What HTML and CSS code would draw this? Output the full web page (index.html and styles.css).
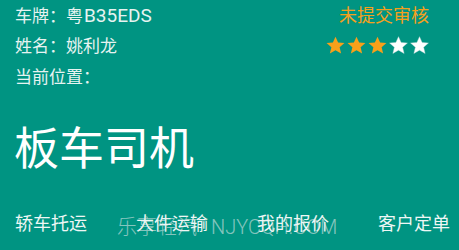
FILE: index.html
```html
<!DOCTYPE html>
<html lang="zh-CN">
<head>
<meta charset="utf-8">
<link rel="stylesheet" href="styles.css">
</head>
<body>
<div class="screen">
  <div class="info">
    <div class="fields">
      <div class="field">车牌：粤<span class="latin">B35EDS</span></div>
      <div class="field">姓名：姚利龙</div>
      <div class="field">当前位置：</div>
    </div>
    <div class="status">
      <div class="status-text">未提交审核</div>
      <div class="stars">
        <svg class="star on" viewBox="0 0 24 24"><path d="M12 0.8l3.3 7.4 8 .7-6.1 5.3 1.9 7.9L12 17.9l-7.1 4.2 1.9-7.9L.7 8.9l8-.7z"/></svg>
        <svg class="star on" viewBox="0 0 24 24"><path d="M12 0.8l3.3 7.4 8 .7-6.1 5.3 1.9 7.9L12 17.9l-7.1 4.2 1.9-7.9L.7 8.9l8-.7z"/></svg>
        <svg class="star on" viewBox="0 0 24 24"><path d="M12 0.8l3.3 7.4 8 .7-6.1 5.3 1.9 7.9L12 17.9l-7.1 4.2 1.9-7.9L.7 8.9l8-.7z"/></svg>
        <svg class="star off" viewBox="0 0 24 24"><path d="M12 0.8l3.3 7.4 8 .7-6.1 5.3 1.9 7.9L12 17.9l-7.1 4.2 1.9-7.9L.7 8.9l8-.7z"/></svg>
        <svg class="star off" viewBox="0 0 24 24"><path d="M12 0.8l3.3 7.4 8 .7-6.1 5.3 1.9 7.9L12 17.9l-7.1 4.2 1.9-7.9L.7 8.9l8-.7z"/></svg>
      </div>
    </div>
  </div>
  <div class="title">板车司机</div>
  <div class="nav">
    <div class="nav-item">轿车托运</div>
    <div class="nav-item">大件运输</div>
    <div class="nav-item">我的报价</div>
    <div class="nav-item">客户定单</div>
  </div>
  <div class="watermark">乐享轻汽<span class="watermark-site">NJYCQH.COM</span></div>
</div>
</body>
</html>
```
FILE: styles.css
```css
html, body {
  margin: 0;
  padding: 0;
}
body {
  background: #009482;
  font-family: Roboto, "Noto Sans CJK SC", sans-serif;
}
.screen {
  position: relative;
  width: 459px;
  height: 250px;
  overflow: hidden;
  background: #009482;
  color: #e6f3f1;
}
.info {
  display: flex;
  justify-content: space-between;
  padding: 0 30px 0 15px;
}
.field {
  font-size: 17px;
  line-height: 31px;
  height: 31px;
}
.latin {
  font-size: 19px;
  margin-left: 1px;
}
.status {
  display: flex;
  flex-direction: column;
  align-items: flex-end;
}
.status-text {
  font-size: 18px;
  line-height: 31px;
  height: 31px;
  color: #f6a01c;
}
.stars {
  display: flex;
  gap: 2px;
  height: 29px;
  align-items: center;
}
.star {
  width: 19px;
  height: 19px;
}
.star.on path {
  fill: #f8a01a;
}
.star.off path {
  fill: #ffffff;
  stroke: #c4dcd8;
  stroke-width: 0.5;
}
.title {
  margin-top: 27px;
  padding-left: 14px;
  font-size: 45px;
  line-height: 60px;
  height: 60px;
  color: #ffffff;
}
.nav {
  margin-top: 29px;
  display: flex;
  justify-content: space-between;
  padding: 0 9px 0 15px;
}
.nav-item {
  font-size: 18px;
  line-height: 30px;
  color: #eef7f5;
}
.watermark {
  position: absolute;
  left: 117px;
  top: 213px;
  font-size: 20px;
  line-height: 28px;
  font-weight: 300;
  white-space: nowrap;
  color: rgba(225, 232, 232, 0.6);
}
.watermark-site {
  margin-left: 14px;
}
```
